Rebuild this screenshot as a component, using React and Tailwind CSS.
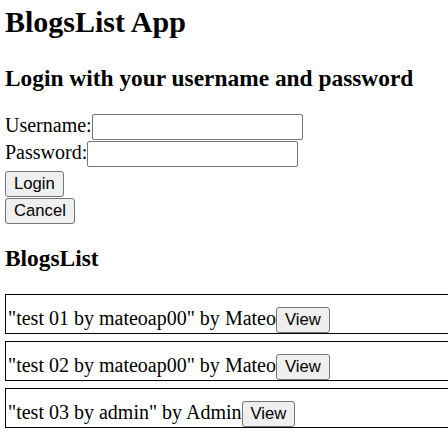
import React from 'react'

const blogs = [
  { title: 'test 01 by mateoap00', author: 'Mateo' },
  { title: 'test 02 by mateoap00', author: 'Mateo' },
  { title: 'test 03 by admin', author: 'Admin' },
]

function Btn({ children }) {
  return (
    <button className="h-[26px] px-[8px] border border-[#767676] rounded-[3px] bg-[#efefef] text-black text-[16.67px] leading-[20px] font-['Liberation_Sans',Arial,sans-serif]">
      {children}
    </button>
  )
}

export default function App() {
  return (
    <div className="min-h-screen bg-white text-black pl-[5px] font-['Liberation_Serif','Times_New_Roman',serif] text-[20px] overflow-hidden">
      <h2 className="mt-[4px] text-[30px] leading-[36px] font-bold">BlogsList App</h2>

      {/* Login form */}
      <h3 className="mt-[24px] text-[23.4px] leading-[28px] font-bold">Login with your username and password</h3>
      <div className="mt-[22px]">
        <div className="flex items-start h-[27px]">
          <span className="leading-[22px]">Username:</span>
          <input type="text" className="w-[211px] h-[26px] border border-[#767676] rounded-[2px] px-[2px] outline-none" />
        </div>
        <div className="flex items-start h-[26px]">
          <span className="leading-[22px]">Password:</span>
          <input type="password" className="w-[211px] h-[26px] border border-[#767676] rounded-[2px] px-[2px] outline-none" />
        </div>
        <div className="h-[27px]">
          <Btn>Login</Btn>
        </div>
        <div className="h-[26px]">
          <Btn>Cancel</Btn>
        </div>
      </div>

      {/* Blogs */}
      <h3 className="mt-[24px] text-[23.4px] leading-[28px] font-bold">BlogsList</h3>
      <div className="mt-[22px] flex flex-col gap-[7px]">
        {blogs.map((b) => (
          <div key={b.title} className="border border-r-0 border-black pt-[12px] pl-[2px]">
            <div className="flex items-start h-[26px]">
              <span className="leading-[22px] whitespace-nowrap">"{b.title}" by {b.author}</span>
              <Btn>View</Btn>
            </div>
          </div>
        ))}
      </div>
    </div>
  )
}
